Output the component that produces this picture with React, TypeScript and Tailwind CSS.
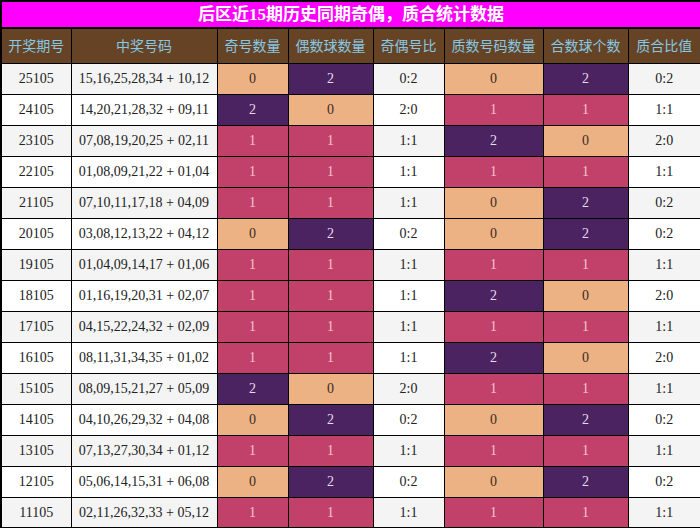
const rows: [string, string, number, number, string, number, number, string][] = [
  ['25105', '15,16,25,28,34 + 10,12', 0, 2, '0:2', 0, 2, '0:2'],
  ['24105', '14,20,21,28,32 + 09,11', 2, 0, '2:0', 1, 1, '1:1'],
  ['23105', '07,08,19,20,25 + 02,11', 1, 1, '1:1', 2, 0, '2:0'],
  ['22105', '01,08,09,21,22 + 01,04', 1, 1, '1:1', 1, 1, '1:1'],
  ['21105', '07,10,11,17,18 + 04,09', 1, 1, '1:1', 0, 2, '0:2'],
  ['20105', '03,08,12,13,22 + 04,12', 0, 2, '0:2', 0, 2, '0:2'],
  ['19105', '01,04,09,14,17 + 01,06', 1, 1, '1:1', 1, 1, '1:1'],
  ['18105', '01,16,19,20,31 + 02,07', 1, 1, '1:1', 2, 0, '2:0'],
  ['17105', '04,15,22,24,32 + 02,09', 1, 1, '1:1', 1, 1, '1:1'],
  ['16105', '08,11,31,34,35 + 01,02', 1, 1, '1:1', 2, 0, '2:0'],
  ['15105', '08,09,15,21,27 + 05,09', 2, 0, '2:0', 1, 1, '1:1'],
  ['14105', '04,10,26,29,32 + 04,08', 0, 2, '0:2', 0, 2, '0:2'],
  ['13105', '07,13,27,30,34 + 01,12', 1, 1, '1:1', 1, 1, '1:1'],
  ['12105', '05,06,14,15,31 + 06,08', 0, 2, '0:2', 0, 2, '0:2'],
  ['11105', '02,11,26,32,33 + 05,12', 1, 1, '1:1', 1, 1, '1:1'],
];

const headers = ['开奖期号', '中奖号码', '奇号数量', '偶数球数量', '奇偶号比', '质数号码数量', '合数球个数', '质合比值'];
const widths = ['w-[70px]', 'w-[146px]', 'w-[71px]', 'w-[85px]', 'w-[71px]', 'w-[99px]', 'w-[85px]', 'w-[73px]'];

// 0 = peach, 1 = rose, 2 = purple
function countCell(n: number) {
  if (n === 0) return 'bg-[#edb283] text-[#3a2a22]';
  if (n === 1) return 'bg-[#c1416a] text-[#f4c3d2]';
  return 'bg-[#4b2361] text-[#e6dcee]';
}

export default function App() {
  return (
    <div className="w-[700px] h-[528px] bg-white" style={{ fontFamily: '"Liberation Serif", "Noto Sans CJK SC", serif' }}>
      <table className="w-[700px] table-fixed border-collapse border-2 border-black text-center text-[14px]">
        <colgroup>
          {widths.map((w, i) => (
            <col key={i} className={w} />
          ))}
        </colgroup>
        <thead>
          <tr className="h-[27px]">
            <th colSpan={8} className="bg-[#ff00ff] border-b-2 border-black text-white text-[17px] font-bold leading-none">
              后区近15期历史同期奇偶，质合统计数据
            </th>
          </tr>
          <tr className="h-[35px]">
            {headers.map((h) => (
              <th
                key={h}
                className="bg-[#654324] border border-black text-[#86c8e6] font-normal"
                style={{ fontFamily: '"Noto Sans CJK SC", sans-serif' }}
              >
                {h}
              </th>
            ))}
          </tr>
        </thead>
        <tbody>
          {rows.map((r, i) => {
            const bg = i % 2 === 0 ? 'bg-[#f4f4f4]' : 'bg-white';
            return (
              <tr key={r[0]} className="h-[31px] text-[#222]">
                <td className={`border border-black ${bg}`}>{r[0]}</td>
                <td className={`border border-black ${bg}`}>{r[1]}</td>
                <td className={`border border-black ${countCell(r[2])}`}>{r[2]}</td>
                <td className={`border border-black ${countCell(r[3])}`}>{r[3]}</td>
                <td className={`border border-black ${bg}`}>{r[4]}</td>
                <td className={`border border-black ${countCell(r[5])}`}>{r[5]}</td>
                <td className={`border border-black ${countCell(r[6])}`}>{r[6]}</td>
                <td className={`border border-black ${bg}`}>{r[7]}</td>
              </tr>
            );
          })}
        </tbody>
      </table>
    </div>
  );
}
